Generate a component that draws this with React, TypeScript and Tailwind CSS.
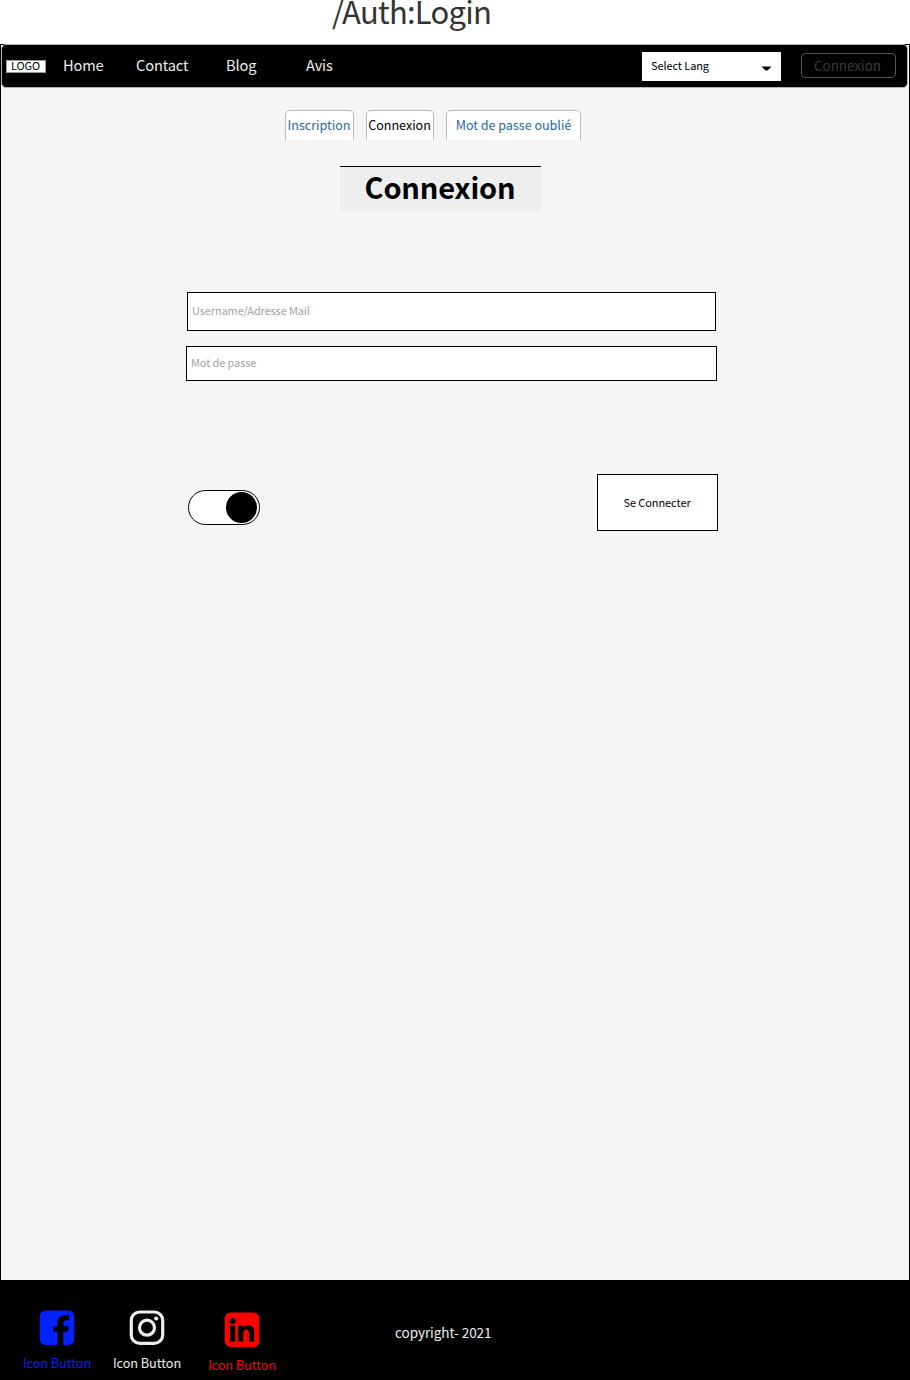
import React from "react";

const navItems = [
  { label: "Home", cls: "w-[73px]" },
  { label: "Contact", cls: "w-[90px]" },
  { label: "Blog", cls: "w-[80px]" },
  { label: "Avis", cls: "w-[60px]" },
];

const tabs = [
  { label: "Inscription", cls: "w-[69px] pr-px text-[#286aa6]" },
  { label: "Connexion", cls: "w-[68px] pr-px text-black" },
  { label: "Mot de passe oublié", cls: "w-[135px] text-[#286aa6]" },
];

function Header() {
  return (
    <header className="mr-px flex h-[44px] items-start rounded-[5px] border border-[#b3b3b3] bg-black pl-1 text-[#eeeeee]">
      <div className="mt-[15px] flex h-[13px] w-[40px] items-center justify-center border border-[#999999] bg-white pr-px pb-[3px] text-[11px] leading-[11px] tracking-[-0.1px] text-black">
        LOGO
      </div>
      <nav className="mt-[10px] ml-[17px] flex text-[14.6px] leading-[20px] tracking-[-0.12px]">
        {navItems.map((item) => (
          <a key={item.label} className={item.cls}>
            {item.label}
          </a>
        ))}
      </nav>
      <div className="mt-[7px] ml-auto flex h-[29px] w-[139px] items-center justify-between bg-white pr-[9px] pl-[9px] text-[11px] tracking-[-0.1px] text-black">
        <span className="pb-[3px] leading-[16px]">Select Lang</span>
        <svg className="mt-[3px]" width="11" height="5" viewBox="0 0 11 5">
          <path d="M0.5 0.5H10.5L7 4Q5.5 5 4 4Z" fill="black" />
        </svg>
      </div>
      <button className="mt-[8px] mr-[11px] ml-[20px] flex h-[25px] w-[95px] items-center justify-center rounded-[4px] border border-[#555555] pr-[2px] pb-[2px] text-[13.5px] leading-[20px] tracking-[-0.05px] text-[#3b3b3b]">
        Connexion
      </button>
    </header>
  );
}

function Footer() {
  return (
    <footer className="flex h-[100px] items-start bg-black text-[12.7px] leading-[18px] tracking-[-0.05px] text-[#eeeeee]">
      <div className="mt-[30px] ml-[21px] flex w-[70px] flex-col items-center text-[#0022ff]">
        <svg width="36" height="36" viewBox="0 0 36 36">
          <rect x="0.7" y="0.4" width="34.6" height="34.6" rx="6" fill="currentColor" />
          <path
            d="M18.5 36V21.7H14.2V16.2H18.5V12.9C18.5 8 21.2 5.2 26 5.2C27.8 5.2 29.2 5.4 30.2 5.6V10.3H27.5C25.2 10.3 24.3 11.4 24.3 13.3V16.2H29.9L29 21.7H24.3V36Z"
            fill="black"
          />
        </svg>
        <span className="mt-[8px] whitespace-nowrap">Icon Button</span>
      </div>
      <div className="mt-[30px] ml-[20px] flex w-[70px] flex-col items-center">
        <svg width="36" height="36" viewBox="0 0 36 36" fill="none" stroke="currentColor" strokeWidth="3.2">
          <rect x="2.3" y="2" width="31.4" height="31.4" rx="8.5" />
          <circle cx="18" cy="17.7" r="7.5" />
          <circle cx="27.2" cy="8.5" r="2.1" fill="currentColor" stroke="none" />
        </svg>
        <span className="mt-[8px] whitespace-nowrap">Icon Button</span>
      </div>
      <div className="mt-[32px] ml-[25px] flex w-[70px] flex-col items-center text-[#ff0000]">
        <svg width="36" height="36" viewBox="0 0 36 36">
          <rect x="0.7" y="0.4" width="34.6" height="34.6" rx="6" fill="currentColor" />
          <circle cx="8.6" cy="8.9" r="3" fill="black" />
          <path
            d="M6 13.6H11.2V29.5H6ZM14.1 13.6H19.1V15.8C20 14.3 21.7 13.2 24.1 13.2C28.6 13.2 30.2 16 30.2 20.6V29.5H25V21.6C25 19.4 24.6 17.7 22.3 17.7C20 17.7 19.3 19.4 19.3 21.6V29.5H14.1Z"
            fill="black"
          />
        </svg>
        <span className="mt-[8px] whitespace-nowrap">Icon Button</span>
      </div>
      <p className="mt-[42px] ml-[118px] text-[13.5px] leading-[20px]">copyright- 2021</p>
    </footer>
  );
}

export default function App() {
  return (
    <div className="flex h-[1380px] w-[910px] flex-col overflow-hidden bg-white font-['Noto_Sans_CJK_JP',sans-serif]">
      <div className="h-[44px] pl-[332px] text-[31px] leading-[22px] tracking-[-0.75px] text-[#333333]">/Auth:Login</div>
      <div className="flex h-[1336px] flex-col border-x border-black bg-[#f5f5f5]">
        <div className="bg-white shadow-[inset_0_1px_0_#000]">
          <Header />
        </div>
        <main className="flex grow flex-col">
          <nav className="mt-[22px] ml-[284px] flex gap-[12px] text-[12.6px] leading-[18px] tracking-[-0.03px]">
            {tabs.map((tab) => (
              <a
                key={tab.label}
                className={`flex h-[30px] items-center justify-center rounded-t-[5px] border-x border-t border-[#bbbbbb] bg-white pb-[2px] whitespace-nowrap ${tab.cls}`}
              >
                {tab.label}
              </a>
            ))}
          </nav>
          <h1 className="mt-[26px] ml-[339px] flex h-[45px] w-[201px] items-center justify-center border-t border-black bg-[#eeeeee] pr-px pb-[7px] text-[29px] leading-[38px] font-bold tracking-[-0.2px] text-black">
            Connexion
          </h1>
          <input
            placeholder="Username/Adresse Mail"
            className="mt-[81px] ml-[186px] h-[39px] w-[529px] border border-black bg-white px-1 pb-[3px] text-[11px] tracking-[-0.12px] placeholder:text-[#a3a3a3]"
          />
          <input
            placeholder="Mot de passe"
            className="mt-[15px] ml-[185px] h-[35px] w-[531px] border border-black bg-white px-1 pb-[3px] text-[11px] tracking-[-0.12px] placeholder:text-[#a3a3a3]"
          />
          <div className="mt-[93px] ml-[187px] flex w-[530px] items-start justify-between">
            <div className="mt-[16px] flex h-[35px] w-[72px] items-center justify-end rounded-full border border-black bg-white pr-[2px]">
              <div className="size-[31px] rounded-full bg-black" />
            </div>
            <button className="flex h-[57px] w-[121px] items-center justify-center border border-black bg-white pr-px text-[11px] tracking-[-0.08px] text-black">
              Se Connecter
            </button>
          </div>
        </main>
        <Footer />
      </div>
    </div>
  );
}
